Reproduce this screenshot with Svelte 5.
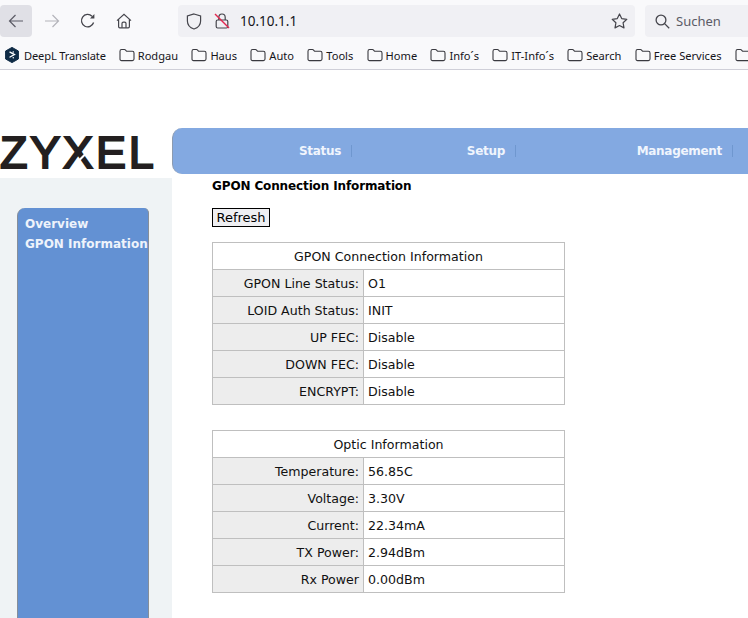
<script>
  const bookmarks = ['Rodgau','Haus','Auto','Tools','Home','Info´s','IT-Info´s','Search','Free Services',''];
  const gpon = [['GPON Line Status:','O1'],['LOID Auth Status:','INIT'],['UP FEC:','Disable'],['DOWN FEC:','Disable'],['ENCRYPT:','Disable']];
  const optic = [['Temperature:','56.85C'],['Voltage:','3.30V'],['Current:','22.34mA'],['TX Power:','2.94dBm'],['Rx Power','0.00dBm']];
  const tables = [['GPON Connection Information',gpon],['Optic Information',optic]];
  const nav = [['Status','nav-status'],['Setup','nav-setup'],['Management','nav-mgmt']];
</script>

{#snippet folder()}
  <svg class="folder" width="16" height="14" viewBox="0 0 16 14" fill="none" stroke="#3a3a40" stroke-width="1.1">
    <path d="M1 3.2C1 2 1.7 1.5 2.6 1.5H5.4C6.2 1.5 6.5 2 7 2.6C7.4 3.1 7.7 3.3 8.3 3.3H13.4C14.4 3.3 15 4 15 5V11C15 12 14.4 12.6 13.4 12.6H2.6C1.6 12.6 1 12 1 11Z"/>
  </svg>
{/snippet}

<div class="page">
  <header class="chrome">
    <div class="toolbar">
      <div class="btn back">
        <svg width="16" height="16" viewBox="0 0 16 16" fill="none" stroke="#5b5b66" stroke-width="1.2"><path d="M15 8H1.5M7.5 2L1.5 8L7.5 14"/></svg>
      </div>
      <div class="btn fwd">
        <svg width="16" height="16" viewBox="0 0 16 16" fill="none" stroke="#b4b4ba" stroke-width="1.2"><path d="M1 8H14.5M8.5 2L14.5 8L8.5 14"/></svg>
      </div>
      <div class="btn reload">
        <svg width="16" height="16" viewBox="0 0 16 16" fill="none" stroke="#45454c" stroke-width="1.3"><path d="M13.6 9.5A6.2 6.2 0 1 1 12 3.2"/><path d="M14.4 1V5.4H10Z" fill="#45454c" stroke="none"/></svg>
      </div>
      <div class="btn home">
        <svg width="16" height="16" viewBox="0 0 16 16" fill="none" stroke="#45454c" stroke-width="1.2"><path d="M1 7.6L8 1.2L15 7.6M2.6 6.4V13.4C2.6 14.2 3 14.8 3.8 14.8H12.2C13 14.8 13.4 14.2 13.4 13.4V6.4"/><path d="M6 14.8V10.6C6 9.8 6.6 9.2 7.4 9.2H8.6C9.4 9.2 10 9.8 10 10.6V14.8"/></svg>
      </div>
      <div class="urlbar">
        <svg class="shield" width="16" height="17" viewBox="0 0 16 17" fill="none" stroke="#45454c" stroke-width="1.2"><path d="M8 1L14.6 3V8C14.6 12 11.6 14.8 8 16C4.4 14.8 1.4 12 1.4 8V3Z"/></svg>
        <svg class="lock" width="16" height="16" viewBox="0 0 16 16" fill="none" stroke="#45454c" stroke-width="1.2">
          <path d="M4.8 7V4.4C4.8 2.4 6.2 1 8 1S11.2 2.4 11.2 4.4V7"/>
          <rect x="2.2" y="7" width="11.6" height="8" rx="1.5"/>
          <path d="M1 1L15 15" stroke="#e22850" stroke-width="1.4"/>
        </svg>
        <span class="url">10.10.1.1</span>
        <svg class="star" width="17" height="16" viewBox="0 0 17 16" fill="none" stroke="#45454c" stroke-width="1.2"><path d="M8.5 1L10.7 5.6L15.8 6.3L12.1 9.8L13 14.9L8.5 12.5L4 14.9L4.9 9.8L1.2 6.3L6.3 5.6Z" stroke-linejoin="round"/></svg>
      </div>
      <div class="search">
        <svg width="15" height="15" viewBox="0 0 15 15" fill="none" stroke="#45454c" stroke-width="1.3"><circle cx="6" cy="6" r="4.9"/><path d="M9.6 9.6L14.2 14.2"/></svg>
        <span>Suchen</span>
      </div>
    </div>
    <nav class="bookmarks">
      <span class="mark first">
        <svg width="14" height="16" viewBox="0 0 14 16"><path d="M7 0.4L13.4 4V12L7 15.6L0.6 12V4Z" fill="#0f2b46" stroke="#0f2b46" stroke-linejoin="round"/><path d="M5 5.2L9.4 7.6L5 10M8.2 5H8.3M8.2 10.8H8.3" fill="none" stroke="#fff" stroke-width="1.4" stroke-linecap="round"/></svg>
        <span>DeepL Translate</span>
      </span>
      {#each bookmarks as b}
        <span class="mark">{@render folder()}{b}</span>
      {/each}
    </nav>
  </header>

  <div class="masthead">
    <div class="logo"><span class="logotext">ZYXEL</span><i class="cut"></i></div>
    <div class="navbar">
      {#each nav as [label, cls]}
        <a class="navitem {cls}">{label}</a>
      {/each}
    </div>
  </div>

  <div class="body">
    <aside class="side">
      <div class="menu">
        <div>Overview</div>
        <div>GPON Information</div>
      </div>
    </aside>
    <main class="content">
      <h1>GPON Connection Information</h1>
      <button>Refresh</button>
      {#each tables as [title, rows]}
        <table>
          <colgroup><col class="c1" /><col /></colgroup>
          <thead><tr><th colspan="2">{title}</th></tr></thead>
          <tbody>
            {#each rows as [k, v]}
              <tr><td class="k">{k}</td><td class="v">{v}</td></tr>
            {/each}
          </tbody>
        </table>
      {/each}
    </main>
  </div>
</div>

<style>
  :global(body) { margin: 0; background: #fff; }
  .page { width: 748px; height: 618px; overflow: hidden; display: flex; flex-direction: column; font-family: "DejaVu Sans", sans-serif; }

  .chrome { height: 69px; background: #f9f9fb; border-bottom: 1px solid #cfcfd8; font-family: "Noto Sans", sans-serif; flex: none; }
  .toolbar { height: 32px; padding-top: 5px; display: flex; align-items: stretch; }
  .btn { width: 32px; display: flex; align-items: center; justify-content: center; border-radius: 4px; flex: none; }
  .back { background: #e0e0e6; margin-right: 4px; }
  .fwd { margin-right: 4px; }
  .reload { margin-right: 4px; }
  .home { margin-right: 38px; }
  .btn svg { display: block; }
  .urlbar { width: 457px; background: #f0f0f4; border-radius: 4px; display: flex; align-items: center; padding-left: 8px; box-sizing: border-box; flex: none; }
  .lock { margin-left: 12px; }
  .url { margin-left: 10px; font-size: 13.5px; color: #15141a; flex: 1; }
  .star { margin-right: 7px; }
  .search { margin-left: 10px; flex: 1; background: #f0f0f4; border-radius: 4px 0 0 4px; display: flex; align-items: center; padding-left: 10px; gap: 6px; font-size: 13px; color: #5b5b66; }

  .bookmarks { display: flex; align-items: center; height: 32px; padding: 4px 0 0 5px; box-sizing: border-box; white-space: nowrap; font-size: 11.1px; color: #15141a; }
  .mark { display: inline-flex; align-items: center; gap: 3px; margin-right: 13.3px; }
  .mark.first { margin-right: 13px; gap: 5px; }
  .first span { letter-spacing: -0.14px; }
  .folder { flex: none; }

  .masthead { margin-top: 58px; display: flex; height: 46px; flex: none; }
  .logo { width: 172px; position: relative; flex: none; color: #231f20; }
  .logotext { display: block; font: 400 45px/46px "Liberation Sans", sans-serif; letter-spacing: 2.8px; -webkit-text-stroke: 2px #231f20; margin-top: 2px; }
  .cut { position: absolute; left: 78px; top: 27px; width: 11px; height: 2.4px; background: #fff; transform: rotate(-45deg); }
  .navbar { flex: 1; background: #83a9e1; border-left: 1px solid #8c9bb0; border-radius: 10px 0 0 10px; box-sizing: border-box; display: flex; align-items: center; }
  .navitem { color: #f0f5fd; font: 700 12px "DejaVu Sans", sans-serif; letter-spacing: -0.3px; text-align: right; padding-right: 10px; border-right: 1px solid #6f97cf; line-height: 12px; box-sizing: border-box; flex: none; }
  .nav-status { width: 179px; }
  .nav-setup { width: 164px; }
  .nav-mgmt { width: 217px; }

  .body { flex: 1; display: flex; margin-top: 4px; min-height: 0; }
  .side { width: 172px; background: #eff3f5; flex: none; padding: 30px 23px 0 17px; box-sizing: border-box; }
  .menu { background: #6391d3; height: 460px; border: solid #868e99; border-width: 0 1px 0 1px; border-radius: 8px 5px 0 0; padding: 6px 0 0 7px; font: 700 12px/20px "DejaVu Sans", sans-serif; color: #eef3fb; white-space: nowrap; box-sizing: border-box; }
  .content { flex: 1; padding-left: 40px; }
  h1 { font: 700 12px/15px "DejaVu Sans", sans-serif; letter-spacing: -0.13px; margin: 1px 0 0; color: #000; }
  button { display: block; margin: 14px 0 15px; width: 58px; height: 19px; padding: 0; font: 13px "DejaVu Sans", sans-serif; background: #efeff2; border: 1px solid #000; color: #000; }
  table { border-collapse: collapse; width: 353px; margin-bottom: 25px; font-size: 12.6px; color: #111; table-layout: fixed; }
  .c1 { width: 151px; }
  th, td { border: 1px solid #bfbfbf; height: 27px; padding: 0; box-sizing: border-box; font-weight: 400; }
  th { background: #fff; text-align: center; }
  .k { background: #ededed; text-align: right; padding-right: 4px; }
  .v { padding-left: 4px; background: #fff; }
</style>
